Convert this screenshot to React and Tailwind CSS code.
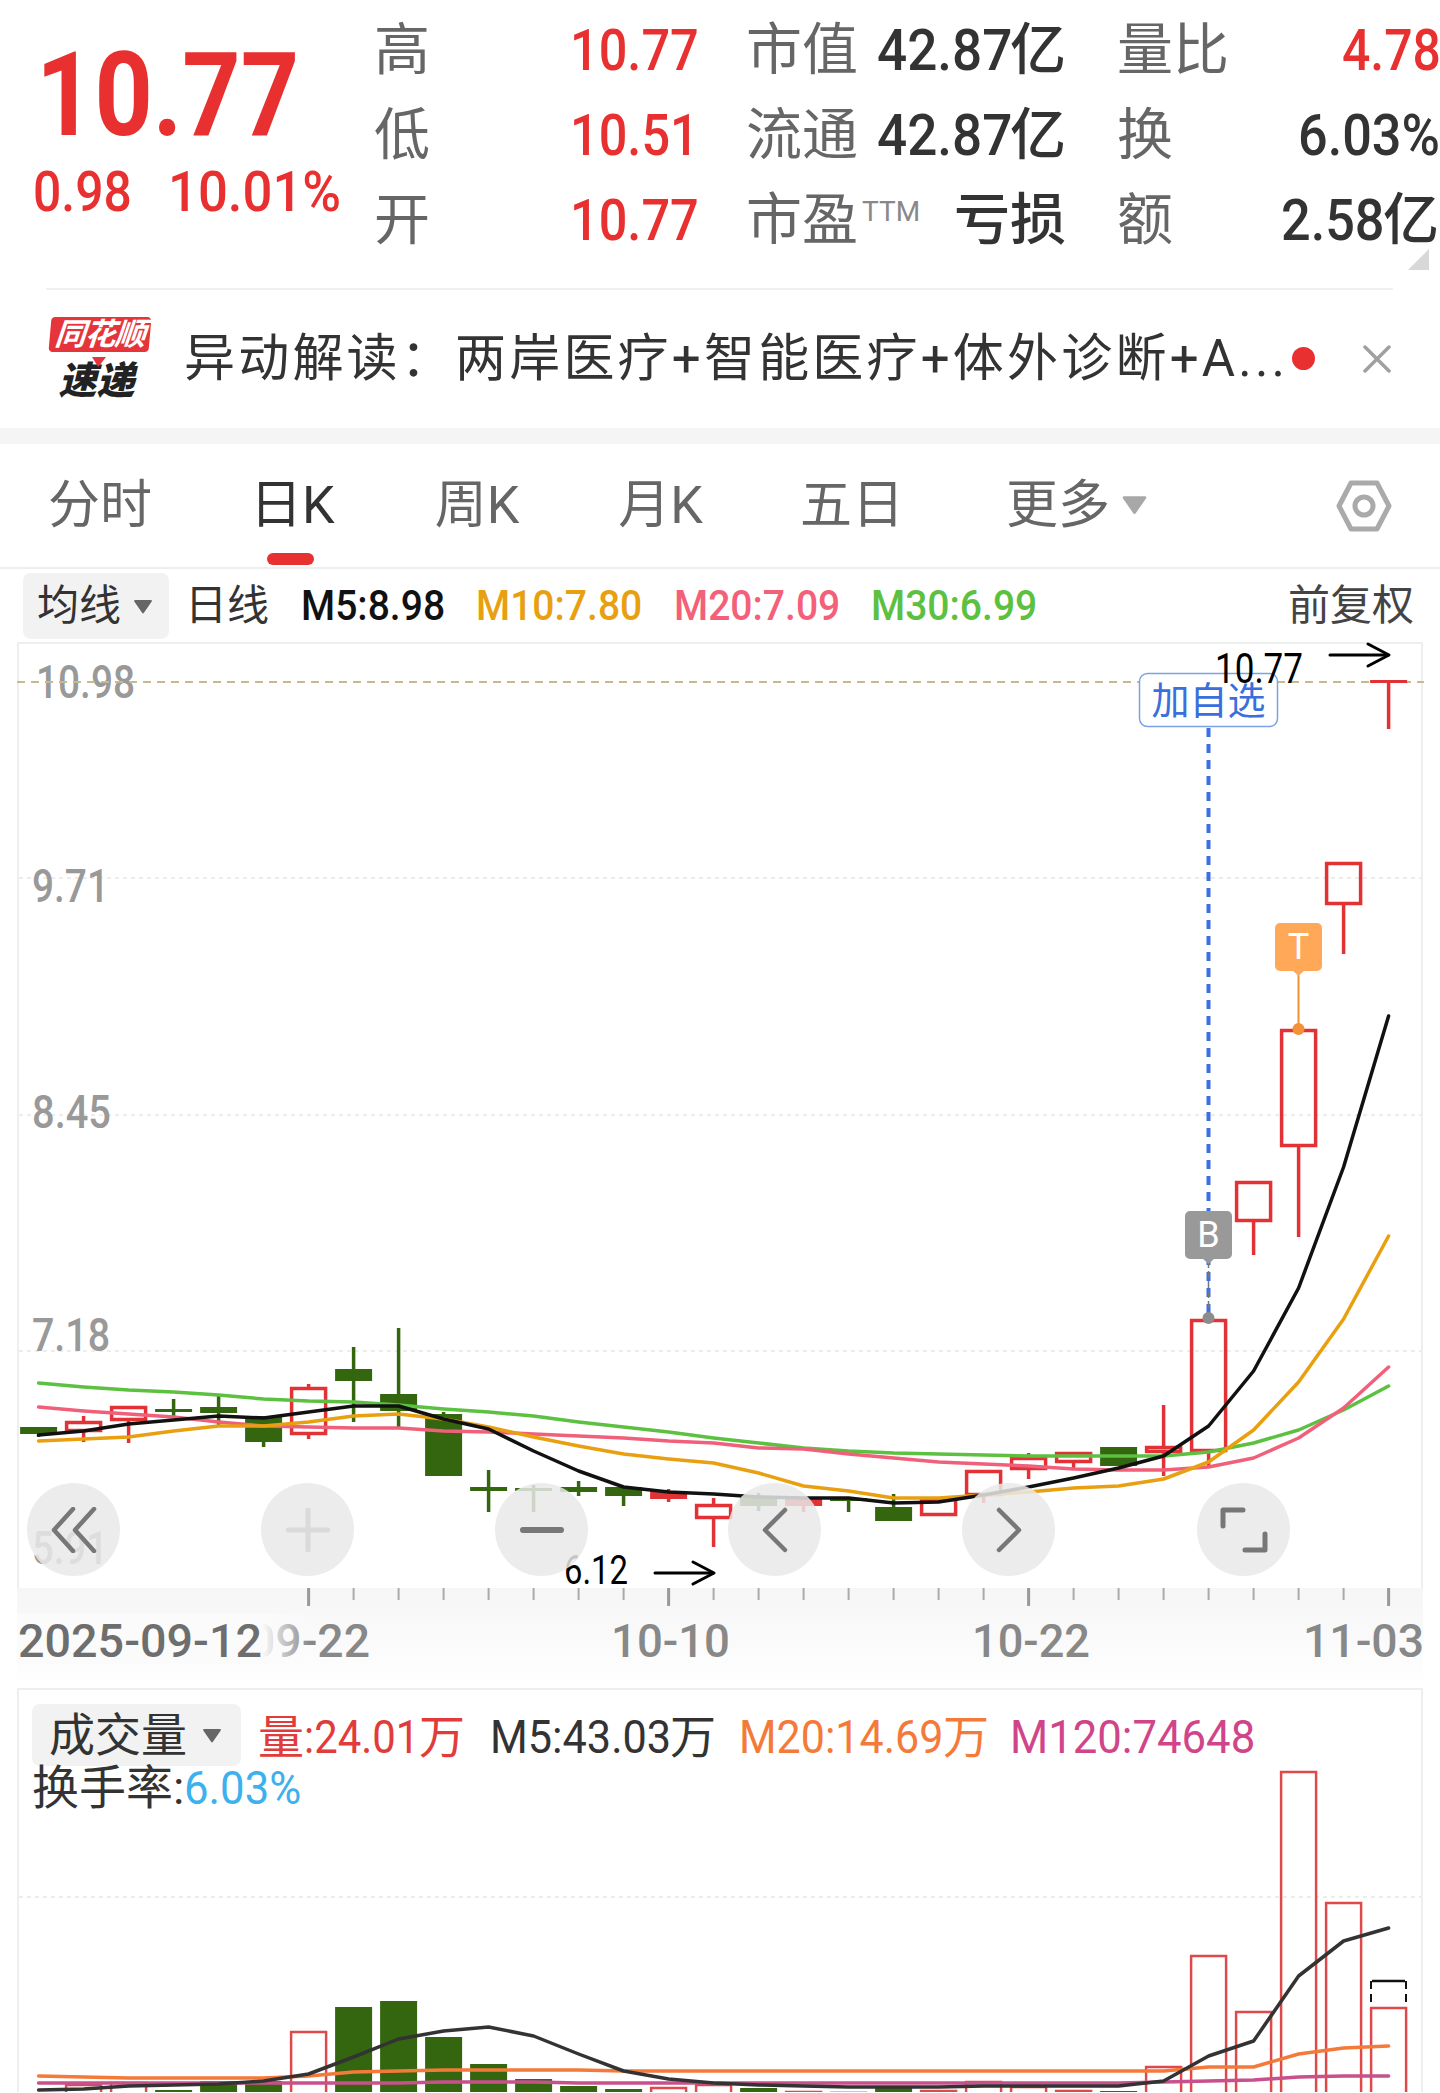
import React from 'react';

const GREEN = '#33660f';
const RED = '#e33236';
const cx = (i) => 38.6 + 45 * i;

// [tipo, cuerpoArriba, cuerpoAbajo, mechaArriba, mechaAbajo]
const CANDLES = [
  ['g', 1428, 1435, 1428, 1438], ['r', 1422, 1433, 1417, 1443], ['r', 1407, 1422, 1407, 1444],
  ['g', 1410, 1413, 1400, 1417], ['g', 1408, 1414, 1397, 1426], ['g', 1417, 1443, 1417, 1448],
  ['r', 1388, 1436, 1385, 1440], ['g', 1370, 1382, 1348, 1423], ['g', 1395, 1412, 1329, 1428],
  ['g', 1415, 1477, 1413, 1477], ['g', 1488, 1492, 1471, 1513], ['g', 1489, 1492, 1486, 1513],
  ['g', 1488, 1493, 1482, 1497], ['g', 1488, 1497, 1488, 1507], ['f', 1492, 1500, 1490, 1503],
  ['r', 1505, 1520, 1499, 1548], ['g', 1498, 1507, 1494, 1512], ['f', 1498, 1507, 1498, 1513],
  ['g', 1499, 1502, 1499, 1513], ['g', 1508, 1522, 1495, 1522], ['r', 1499, 1517, 1499, 1517],
  ['r', 1471, 1497, 1471, 1504], ['r', 1458, 1471, 1454, 1480], ['r', 1453, 1464, 1453, 1469],
  ['g', 1448, 1467, 1448, 1467], ['r', 1447, 1454, 1406, 1477], ['r', 1320, 1453, 1320, 1467],
  ['r', 1182, 1223, 1182, 1256], ['r', 1030, 1148, 1030, 1238], ['r', 863, 906, 863, 955],
  ['f', 681, 684, 681, 730],
];

const MA5 = [1436, 1432, 1425, 1421, 1417, 1419, 1413, 1407, 1407, 1420, 1430, 1452, 1472, 1488, 1493, 1495, 1498, 1499, 1499, 1504, 1503, 1496, 1488, 1479, 1469, 1457, 1427, 1372, 1289, 1168, 1017];
const MA10 = [1442, 1440, 1438, 1432, 1427, 1427, 1423, 1417, 1415, 1420, 1428, 1438, 1447, 1455, 1460, 1464, 1474, 1487, 1492, 1499, 1499, 1496, 1493, 1489, 1487, 1480, 1463, 1431, 1383, 1320, 1237];
const MA20 = [1408, 1412, 1415, 1418, 1423, 1427, 1428, 1429, 1429, 1432, 1433, 1435, 1437, 1439, 1442, 1444, 1449, 1450, 1455, 1459, 1463, 1465, 1467, 1470, 1471, 1471, 1468, 1459, 1439, 1409, 1368];
const MA30 = [1384, 1388, 1391, 1393, 1396, 1400, 1402, 1403, 1406, 1410, 1413, 1417, 1423, 1428, 1433, 1439, 1444, 1449, 1452, 1454, 1455, 1456, 1457, 1457, 1457, 1457, 1453, 1444, 1431, 1411, 1387];

// volumen: [tipo, arriba]
const VOLS = [
  ['g', 2095], ['r', 2085], ['r', 2083], ['g', 2091], ['g', 2082], ['g', 2082], ['r', 2032], ['g', 2008],
  ['g', 2002], ['g', 2038], ['g', 2065], ['g', 2080], ['g', 2087], ['g', 2090], ['r', 2088], ['r', 2085],
  ['g', 2089], ['r', 2092], ['l', 2092], ['g', 2087], ['r', 2091], ['r', 2082], ['r', 2087], ['r', 2091],
  ['g', 2092], ['r', 2067], ['r', 1956], ['r', 2012], ['r', 1772], ['r', 1903], ['r', 2008],
];
const VOL5 = [2091, 2090, 2087, 2086, 2085, 2082, 2075, 2058, 2040, 2032, 2028, 2037, 2055, 2072, 2080, 2084, 2086, 2087, 2088, 2088, 2088, 2087, 2087, 2087, 2087, 2082, 2057, 2042, 1977, 1942, 1929];
const VOL20 = [2077, 2078, 2079, 2079, 2079, 2079, 2077, 2073, 2072, 2071, 2071, 2071, 2071, 2072, 2072, 2072, 2072, 2072, 2072, 2072, 2072, 2072, 2072, 2072, 2072, 2072, 2068, 2068, 2055, 2049, 2047];
const VOL120 = [2084, 2084, 2084, 2084, 2084, 2084, 2084, 2084, 2084, 2083, 2083, 2083, 2084, 2084, 2084, 2084, 2084, 2084, 2084, 2084, 2084, 2084, 2084, 2084, 2084, 2083, 2082, 2081, 2078, 2077, 2077];

const toPoints = (arr) => arr.map((y, i) => `${cx(i)},${y}`).join(' ');

const Line = ({ data, color, width = 3.5 }) => (
  <polyline points={toPoints(data)} fill="none" stroke={color} strokeWidth={width} strokeLinejoin="round" strokeLinecap="round" />
);

/* Numero estrecho: la caja mide lo que se ve y el texto se comprime */
const Num = ({ className = '', children }) => (
  <span className={`inline-block whitespace-nowrap shrink-0 ${className}`}>{children}</span>
);

const Caret = ({ className, color }) => (
  <svg className={className} viewBox="0 0 20 16" fill={color}>
    <path d="M1.5 1h17a1 1 0 0 1 .8 1.6L11 14.6a1.2 1.2 0 0 1-2 0L.7 2.6A1 1 0 0 1 1.500 1Z" />
  </svg>
);

const Arrow = ({ x, y }) => (
  <g fill="none" stroke="#000" strokeWidth="3" strokeLinecap="round" strokeLinejoin="round">
    <path d={`M${x} ${y}H${x + 58}`} />
    <path d={`M${x + 38} ${y - 11}L${x + 59} ${y}L${x + 38} ${y + 11}`} />
  </g>
);

const Stat = ({ label, children }) => (
  <div className="flex items-center justify-between h-[85px]">
    <span className="text-[56px] leading-none text-[#666]">{label}</span>
    <div className="flex items-center">{children}</div>
  </div>
);

const Header = () => (
  <div className="flex h-[288px]">
    <div className="w-[374px] shrink-0 relative">
      <Num className="ml-[36px] mt-[24px] w-[258px] text-[117px] leading-[142px] font-bold text-[#e93030] origin-left scale-x-[0.87]">10.77</Num>
      <div className="flex ml-[33px] mt-[-7px] text-[56px] leading-[66px] font-medium text-[#e93030]">
        <Num className="w-[135px] origin-left scale-x-[0.89]">0.98</Num>
        <Num className="w-[169px] origin-left scale-x-[0.94]">10.01%</Num>
      </div>
    </div>
    <div className="flex-1 flex pt-[7px] relative">
      <div className="w-[322px] shrink-0">
        {[['高', '10.77'], ['低', '10.51'], ['开', '10.77']].map(([l, v]) => (
          <Stat key={l} label={l}>
            <Num className="w-[126px] text-[58px] leading-none font-medium text-[#e93030] origin-left scale-x-[0.87]">{v}</Num>
          </Stat>
        ))}
      </div>
      <div className="w-[320px] shrink-0 ml-[50px]">
        <Stat label="市值">
          <Num className="w-[133px] text-[58px] leading-none font-medium text-[#333] origin-left scale-x-[0.915]">42.87</Num>
          <span className="text-[56px] leading-none font-medium text-[#333]">亿</span>
        </Stat>
        <Stat label="流通">
          <Num className="w-[133px] text-[58px] leading-none font-medium text-[#333] origin-left scale-x-[0.915]">42.87</Num>
          <span className="text-[56px] leading-none font-medium text-[#333]">亿</span>
        </Stat>
        <Stat label={<>市盈<span className="text-[28px] align-[18px] ml-[4px] text-[#888]">TTM</span></>}>
          <span className="text-[56px] leading-none font-medium text-[#333]">亏损</span>
        </Stat>
      </div>
      <div className="w-[322px] shrink-0 ml-[51px]">
        <Stat label="量比">
          <Num className="w-[97px] text-[58px] leading-none font-medium text-[#e93030] origin-left scale-x-[0.86]">4.78</Num>
        </Stat>
        <Stat label="换">
          <Num className="w-[141px] text-[58px] leading-none font-medium text-[#333] origin-left scale-x-[0.9]">6.03%</Num>
        </Stat>
        <Stat label="额">
          <Num className="w-[102px] text-[58px] leading-none font-medium text-[#333] origin-left scale-x-[0.9]">2.58</Num>
          <span className="text-[56px] leading-none font-medium text-[#333]">亿</span>
        </Stat>
      </div>
      <svg className="absolute right-[11px] bottom-[18px] w-[21px] h-[21px]" viewBox="0 0 21 21">
        <path d="M21 0V21H0Z" fill="#d8d8d8" />
      </svg>
    </div>
  </div>
);

const Logo = () => (
  <div className="w-[103px] h-[84px] shrink-0 flex flex-col items-center">
    <div className="relative w-[100px] h-[42px] bg-[#e5343a] rounded-[4px] skew-x-[-5deg] flex items-center justify-center">
      <span className="text-[31px] leading-none font-bold italic text-white tracking-[-1px] whitespace-nowrap">同花顺</span>
      <span className="absolute left-[44px] top-[40px] w-[14px] h-[10px] bg-[#e5343a] [clip-path:polygon(0_0,100%_0,50%_100%)]" />
    </div>
    <span className="mt-[9px] ml-[-6px] text-[38px] leading-[40px] font-black italic text-[#222]">速递</span>
  </div>
);

const News = () => (
  <div className="mx-[46px] w-[1347px] border-t-2 border-[#f0f0f0]" >
    <div className="flex items-center h-[137px] pl-[2px] relative">
      <Logo />
      <span className="ml-[33px] w-[1100px] shrink-0 whitespace-nowrap text-[51px] leading-none tracking-[3.2px] text-[#333]">异动解读：两岸医疗+智能医疗+体外诊断+A...</span>
      <span className="ml-[8px] w-[23px] h-[23px] rounded-full bg-[#e93030] shrink-0" />
      <svg className="ml-[48px] w-[28px] h-[28px] shrink-0" viewBox="0 0 28 28" stroke="#a0a0a0" strokeWidth="3.5" strokeLinecap="round">
        <path d="M2 2L26 26M26 2L2 26" />
      </svg>
    </div>
  </div>
);

const TABS = [
  ['分时', 'ml-[48px]', false],
  ['日K', 'ml-[98px]', true],
  ['周K', 'ml-[100px]', false],
  ['月K', 'ml-[99px]', false],
  ['五日', 'ml-[97px]', false],
];

const Tabs = () => (
  <div className="flex items-center h-[125px] border-b-2 border-[#eee] relative">
    {TABS.map(([t, ml, active]) => (
      <div key={t} className={`relative ${ml}`}>
        <span className={`text-[52px] leading-none whitespace-nowrap ${active ? 'text-[#333]' : 'text-[#666]'}`}>{t}</span>
        {active && <span className="absolute left-[17px] top-[73px] w-[47px] h-[12px] rounded-[6px] bg-[#e93030]" />}
      </div>
    ))}
    <span className="ml-[102px] text-[52px] leading-none whitespace-nowrap text-[#666]">更多</span>
    <Caret className="ml-[12px] mt-[-2px] w-[25px] h-[20px]" color="#a8a8a8" />
    <svg className="ml-[189px] w-[56px] h-[54px]" viewBox="0 0 56 54" fill="none" stroke="#aaa" strokeWidth="5" strokeLinejoin="round">
      <path d="M3 27L15 4H41L53 27L41 50H15Z" />
      <circle cx="28" cy="27" r="9" />
    </svg>
  </div>
);

const MaRow = () => (
  <div className="flex items-center h-[73px] pl-[23px] pt-[1px] text-[42px] leading-none font-medium">
    <div className="flex items-center w-[146px] h-[66px] rounded-[8px] bg-[#f2f2f2] pl-[14px] shrink-0 font-normal">
      <span className="text-[42px] text-[#333]">均线</span>
      <Caret className="ml-[12px] w-[20px] h-[15px]" color="#666" />
    </div>
    <span className="ml-[16px] font-normal text-[#333] whitespace-nowrap">日线</span>
    <Num className="ml-[32px] w-[143px] text-[#111] origin-left scale-x-[0.93]">M5:8.98</Num>
    <Num className="ml-[32px] w-[164px] text-[#e8a010] origin-left scale-x-[0.93]">M10:7.80</Num>
    <Num className="ml-[34px] w-[164px] text-[#f4607a] origin-left scale-x-[0.93]">M20:7.09</Num>
    <Num className="ml-[33px] w-[165px] text-[#5cc040] origin-left scale-x-[0.93]">M30:6.99</Num>
    <span className="ml-[252px] font-normal text-[#444] whitespace-nowrap">前复权</span>
  </div>
);

const Label = ({ x, y, w, fs = 46, fill = '#999', children }) => (
  <text x={x} y={y} fontSize={fs} fill={fill} fontWeight="500" textLength={w} lengthAdjust="spacingAndGlyphs">{children}</text>
);

const PriceChart = () => (
  <svg className="absolute left-[-2px] top-[-2px] w-[1406px] h-[946px] overflow-visible" viewBox="17 643 1406 946">
    {[879, 1116, 1352].map((y) => (
      <path key={y} d={`M19 ${y}H1421`} stroke="#e8e8e8" strokeWidth="1.500" strokeDasharray="4 4" />
    ))}
    <Label x={36} y={699} w={99}>10.98</Label>
    <Label x={32} y={903} w={77}>9.71</Label>
    <Label x={32} y={1129} w={79}>8.45</Label>
    <Label x={32} y={1352} w={78}>7.18</Label>
    <Label x={32} y={1565} w={76}>5.91</Label>
    <path d="M17 683H1424" stroke="#c9b98f" strokeWidth="2" strokeDasharray="8 6" />
    {CANDLES.map(([t, top, bot, wt, wb], i) => {
      const c = cx(i);
      const color = t === 'g' ? GREEN : RED;
      return (
        <g key={i}>
          {wt < top && <path d={`M${c} ${wt}V${top}`} stroke={color} strokeWidth="3.5" />}
          {wb > bot && <path d={`M${c} ${bot}V${wb}`} stroke={color} strokeWidth="3.5" />}
          {t === 'r'
            ? <rect x={c - 17} y={top + 1.500} width={34} height={bot - top - 3} fill="none" stroke={color} strokeWidth="3.5" />
            : <rect x={c - 18.500} y={top} width={37} height={bot - top} fill={color} />}
        </g>
      );
    })}
    <Line data={MA30} color="#5cc040" />
    <Line data={MA20} color="#f0607a" />
    <Line data={MA10} color="#e8a010" />
    <Line data={MA5} color="#111" />
    <path d="M1208.500 729V1320" stroke="#3b6fe8" strokeWidth="4" strokeDasharray="9 7" />
    <path d="M1208.500 1262V1319" stroke="#777" strokeWidth="1.500" strokeDasharray="7 3" />
    <circle cx="1208.500" cy="1319" r="6" fill="#8c8c8c" />
    <path d="M1298.500 975V1030" stroke="#f09030" strokeWidth="2" />
    <circle cx="1298.500" cy="1030" r="6" fill="#f49035" />
    <rect x="1139.500" y="674.500" width="138" height="53" rx="8" fill="#fff" stroke="#7aa2e4" strokeWidth="1.500" />
    <text x="1208.500" y="715" fontSize="38" fill="#3a6fdc" textAnchor="middle">加自选</text>
    <text x={1215} y={684} fontSize="42" fill="#000" textLength={88} lengthAdjust="spacingAndGlyphs">10.77</text>
    <Arrow x={1330} y={656} />
    <text x={564} y={1585} fontSize="40" fill="#000" textLength={64} lengthAdjust="spacingAndGlyphs">6.12</text>
    <Arrow x={655} y={1574} />
  </svg>
);

const Marker = ({ className, label }) => (
  <div className={`absolute w-[47px] h-[48px] rounded-[5px] flex items-center justify-center text-[36px] leading-none text-white ${className}`}>
    {label}
    <span className="absolute left-[16px] top-[46px] w-[15px] h-[7px] bg-inherit [clip-path:polygon(0_0,100%_0,50%_100%)]" />
  </div>
);

const CircleBtn = ({ className, children }) => (
  <div className={`absolute top-[839px] w-[93px] h-[93px] rounded-full bg-[#e9e9e9]/85 flex items-center justify-center ${className}`}>
    {children}
  </div>
);

const Controls = () => (
  <>
    <CircleBtn className="left-[8px]">
      <svg className="w-[46px] h-[46px]" viewBox="0 0 46 46" fill="none" stroke="#777" strokeWidth="4.500" strokeLinecap="round" strokeLinejoin="round">
        <path d="M22 2L3 23L22 44M43 2L24 23L43 44" />
      </svg>
    </CircleBtn>
    <CircleBtn className="left-[242px]">
      <svg className="w-[44px] h-[44px]" viewBox="0 0 44 44" stroke="#dadada" strokeWidth="5" strokeLinecap="round">
        <path d="M22 2V42M2 22H42" />
      </svg>
    </CircleBtn>
    <CircleBtn className="left-[476px]">
      <svg className="w-[44px] h-[8px]" viewBox="0 0 44 8" stroke="#777" strokeWidth="6" strokeLinecap="round">
        <path d="M3 4H41" />
      </svg>
    </CircleBtn>
    <CircleBtn className="left-[709px]">
      <svg className="w-[26px] h-[46px]" viewBox="0 0 26 46" fill="none" stroke="#777" strokeWidth="4.500" strokeLinecap="round" strokeLinejoin="round">
        <path d="M23 3L3 23L23 43" />
      </svg>
    </CircleBtn>
    <CircleBtn className="left-[943px]">
      <svg className="w-[26px] h-[46px]" viewBox="0 0 26 46" fill="none" stroke="#777" strokeWidth="4.500" strokeLinecap="round" strokeLinejoin="round">
        <path d="M3 3L23 23L3 43" />
      </svg>
    </CircleBtn>
    <CircleBtn className="left-[1178px]">
      <svg className="w-[48px] h-[46px]" viewBox="0 0 48 46" fill="none" stroke="#777" strokeWidth="5" strokeLinecap="round" strokeLinejoin="round">
        <path d="M3 19V3H23M45 27V43H25" />
      </svg>
    </CircleBtn>
  </>
);

const MainChart = () => (
  <div className="relative ml-[17px] w-[1406px] h-[946px] border-x-2 border-t-2 border-[#eee]">
    <PriceChart />
    <Marker className="left-[1166px] top-[567px] bg-[#999]" label="B" />
    <Marker className="left-[1256px] top-[279px] bg-[#ffa858]" label="T" />
    <Controls />
  </div>
);

const AXIS_LABELS = [
  [611, 119, '10-10'],
  [972, 118, '10-22'],
  [1303, 121, '11-03'],
];

const TimeAxis = () => (
  <div className="ml-[17px] w-[1406px] h-[100px] bg-linear-to-b from-[#f6f6f6] via-[#fafafa] to-white">
    <svg className="w-[1406px] h-[100px]" viewBox="17 1589 1406 100">
      <defs>
        <linearGradient id="fade" x1="0" x2="1" y1="0" y2="0">
          <stop offset="0" stopColor="#fbfbfb" />
          <stop offset="1" stopColor="#fbfbfb" stopOpacity="0" />
        </linearGradient>
      </defs>
      {CANDLES.map((_, i) => {
        if (i < 6) return null;
        const major = i % 8 === 6;
        return <path key={i} d={`M${cx(i)} 1589V${major ? 1607 : 1601}`} stroke={major ? '#999' : '#aaa'} strokeWidth={major ? 3 : 2} />;
      })}
      <Label x={249} y={1658} w={121} fill="#888">09-22</Label>
      <rect x="17" y="1615" width="245" height="50" fill="#fbfbfb" />
      <rect x="262" y="1615" width="48" height="50" fill="url(#fade)" />
      <Label x={18} y={1658} w={244} fill="#6e6e6e">2025-09-12</Label>
      {AXIS_LABELS.map(([x, w, t]) => (
        <Label key={t} x={x} y={1658} w={w} fill="#888">{t}</Label>
      ))}
    </svg>
  </div>
);

const VolumeChart = () => (
  <svg className="absolute left-[-2px] top-[-2px] w-[1406px] h-[404px]" viewBox="17 1689 1406 404">
    <path d="M19 1898H1421" stroke="#ececec" strokeWidth="2" strokeDasharray="4 4" />
    {VOLS.map(([t, top], i) => {
      const c = cx(i);
      if (t === 'r') {
        return <rect key={i} x={c - 17.500} y={top + 1} width={35} height={2093 - top + 5} fill="none" stroke="#de4a4a" strokeWidth="2.500" />;
      }
      return <rect key={i} x={c - 18.500} y={top} width={37} height={2093 - top} fill={t === 'l' ? '#b9d0ab' : GREEN} />;
    })}
    <path d="M1372 1982H1405" stroke="#111" strokeWidth="2.500" />
    <path d="M1371 1982V2008M1406 1982V2008" stroke="#111" strokeWidth="2" strokeDasharray="8 5" />
    <Line data={VOL120} color="#c8508c" />
    <Line data={VOL20} color="#f47a3a" />
    <Line data={VOL5} color="#333" />
  </svg>
);

const VolumePanel = () => (
  <div className="relative ml-[17px] w-[1406px] h-[404px] border-x-2 border-t-2 border-[#eee] overflow-hidden">
    <VolumeChart />
    <div className="relative flex items-center h-[62px] mt-[14px] ml-[13px] text-[46px] leading-none">
      <div className="flex items-center w-[209px] h-[62px] rounded-[8px] bg-[#f2f2f2] pl-[17px] shrink-0">
        <span className="text-[#333] whitespace-nowrap">成交量</span>
        <Caret className="ml-[15px] w-[20px] h-[15px]" color="#666" />
      </div>
      <div className="flex items-center ml-[17px] pt-[3px] text-[#e23b3b]">
        <span>量</span>
        <Num className="w-[115px] origin-left scale-x-[0.91]">:24.01</Num>
        <span>万</span>
      </div>
      <div className="flex items-center ml-[25px] pt-[3px] text-[#333]">
        <Num className="w-[180px] origin-left scale-x-[0.94]">M5:43.03</Num>
        <span>万</span>
      </div>
      <div className="flex items-center ml-[23px] pt-[3px] text-[#f47a3a]">
        <Num className="w-[204px] origin-left scale-x-[0.935]">M20:14.69</Num>
        <span>万</span>
      </div>
      <Num className="ml-[21px] pt-[3px] w-[243px] text-[#d0458a] origin-left scale-x-[0.95]">M120:74648</Num>
    </div>
    <div className="relative flex items-center mt-[-2px] ml-[13px] h-[46px] text-[47px] leading-none text-[#333]">
      <span className="whitespace-nowrap">换手率:</span>
      <Num className="w-[115px] text-[#3db0ee] origin-left scale-x-[0.93]">6.03%</Num>
    </div>
  </div>
);

export default function App() {
  return (
    <div className="w-[1440px] h-[2093px] overflow-hidden bg-white font-[Roboto,'Noto_Sans_CJK_SC',sans-serif]">
      <Header />
      <News />
      <div className="h-[16px] bg-[#f5f5f5] mt-[1px]" />
      <Tabs />
      <MaRow />
      <MainChart />
      <TimeAxis />
      <VolumePanel />
    </div>
  );
}
